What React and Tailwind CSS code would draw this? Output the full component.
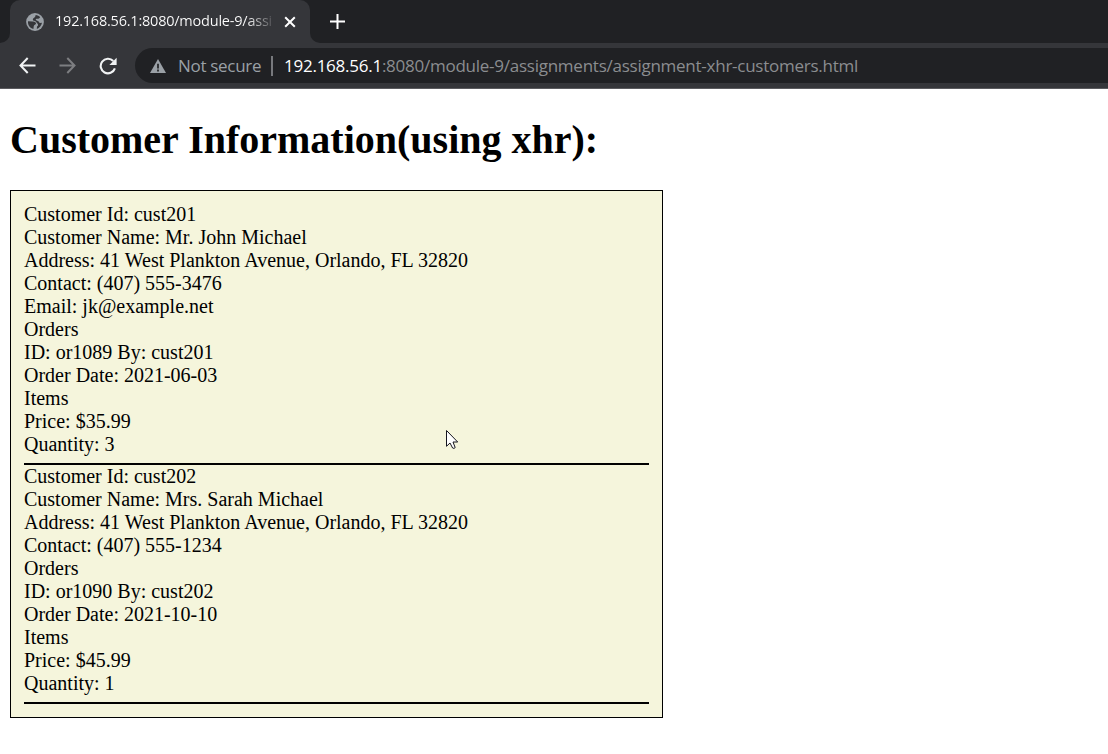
const customers = [
  {
    id: 'cust201',
    lines: [
      'Customer Id: cust201',
      'Customer Name: Mr. John Michael',
      'Address: 41 West Plankton Avenue, Orlando, FL 32820',
      'Contact: (407) 555-3476',
      'Email: jk@example.net',
      'Orders',
      'ID: or1089 By: cust201',
      'Order Date: 2021-06-03',
      'Items',
      'Price: $35.99',
      'Quantity: 3',
    ],
  },
  {
    id: 'cust202',
    lines: [
      'Customer Id: cust202',
      'Customer Name: Mrs. Sarah Michael',
      'Address: 41 West Plankton Avenue, Orlando, FL 32820',
      'Contact: (407) 555-1234',
      'Orders',
      'ID: or1090 By: cust202',
      'Order Date: 2021-10-10',
      'Items',
      'Price: $45.99',
      'Quantity: 1',
    ],
  },
];

function GlobeIcon() {
  return (
    <svg className="ml-4 size-[18px] shrink-0" viewBox="0 0 18 18">
      <circle cx="9" cy="9" r="8.9" fill="#9aa0a6" />
      <path d="M2 8.2 L7 8.4 C9 8.6 10.2 9.4 10 10.8 C9.8 11.8 8 11.6 7.8 13 L7.4 15.9 C4 15.2 1.6 12.2 2 8.2 Z" fill="#35363a" />
      <path d="M9.6 2 C11.6 2.2 13 2.9 14.2 4.2 L13.2 5.2 C12.2 6 10.4 5.4 9.8 6.2 C9.4 7.2 11 7.6 12 8 C13 8.4 13 9.8 14 10 L16 9.8 C15.4 12.8 13.6 15 10.8 15.9 L11 13.6 C12.2 13 12.4 11.6 11.4 10.6 C10.6 9.4 9.6 8 8 7.8 C6.6 7.4 6.6 6 7.4 5.2 C8.4 4.6 9.6 3.8 9.6 2 Z" fill="#35363a" />
    </svg>
  );
}

function TabStrip() {
  return (
    <div className="flex h-[43px] bg-[#202124]">
      <div className="w-[10px] bg-[#35363a]">
        <div className="h-full rounded-br-[10px] bg-[#202124]" />
      </div>
      <div className="flex w-[300px] items-center rounded-t-[10px] bg-[#35363a]">
        <GlobeIcon />
        <div className="ml-[11px] w-[218px] overflow-hidden bg-gradient-to-r from-white from-88% to-white/10 bg-clip-text pb-px font-['Open_Sans',sans-serif] text-[14.5px] tracking-[-0.22px] whitespace-nowrap text-transparent">
          192.168.56.1:8080/module-9/assi
        </div>
        <svg className="ml-[11px] size-[12px] shrink-0" viewBox="0 0 12 12">
          <path d="M1.2 1.2 L10.8 10.8 M10.8 1.2 L1.2 10.8" stroke="#fff" strokeWidth="2" />
        </svg>
      </div>
      <div className="flex-1 bg-[#35363a]">
        <div className="flex h-full items-center rounded-bl-[10px] bg-[#202124] pl-5">
          <svg className="size-[15px]" viewBox="0 0 15 15">
            <path d="M7.5 0 V15 M0 7.5 H15" stroke="#fff" strokeWidth="2" />
          </svg>
        </div>
      </div>
    </div>
  );
}

function Toolbar() {
  return (
    <div className="flex h-[46px] items-start border-b border-[#5b5b5f] bg-[#35363a] pt-[5px]">
      <div className="flex h-[35px] w-[135px] shrink-0 items-center pl-[19px]">
        <svg className="size-[17px]" viewBox="0 0 17 17" fill="none" stroke="#f1f3f4" strokeWidth="2">
          <path d="M16.5 8.5 H2 M8.7 1 L1.5 8.5 L8.7 16" />
        </svg>
        <svg className="ml-[23px] size-[17px]" viewBox="0 0 17 17" fill="none" stroke="#7d7e81" strokeWidth="2">
          <path d="M0.5 8.5 H15 M8.3 1 L15.5 8.5 L8.3 16" />
        </svg>
        <svg className="ml-[23px] size-[18px]" viewBox="0 0 18 18">
          <path d="M15.9 11.4 A7.3 7.3 0 1 1 14.3 4" fill="none" stroke="#f1f3f4" strokeWidth="2.1" />
          <path d="M17.6 0.8 V8 H10.4 Z" fill="#f1f3f4" />
        </svg>
      </div>
      <div className="flex h-[35px] flex-1 items-center rounded-l-full bg-[#202124] pl-[15px] font-['Open_Sans',sans-serif] text-[17px] whitespace-nowrap">
        <svg className="size-[16px] shrink-0" viewBox="0 0 16 16">
          <path d="M8 1 L16 15 H0 Z" fill="#9aa0a6" />
          <path d="M8 5.8 V10.4 M8 11.6 V13.4" stroke="#202124" strokeWidth="1.7" />
        </svg>
        <span className="ml-[12px] w-[93px] tracking-[-0.3px] text-[#9aa0a6]">Not secure</span>
        <span className="h-5 w-[2px] bg-[#77797d]" />
        <span className="ml-[11px] tracking-[-0.25px] text-[#8b8d90]">
          <span className="text-white">192.168.56.1</span>:8080/module-9/assignments/assignment-xhr-customers.html
        </span>
      </div>
    </div>
  );
}

export default function App() {
  return (
    <div className="relative h-[754px] w-[1108px] overflow-hidden bg-white">
      <TabStrip />
      <Toolbar />
      <main className="px-[10px] font-['Liberation_Serif',serif] text-black">
        <h1 className="mt-[28px] h-[46px] text-[40px] leading-[46px] font-bold whitespace-nowrap">Customer Information(using xhr):</h1>
        <div className="mt-[27px] h-[528px] w-[653px] border border-black bg-[#f5f5dc] px-[13px] pt-[12px] text-[20px] leading-[23px]">
          {customers.map((customer) => (
            <section key={customer.id}>
              {customer.lines.map((line) => (
                <div key={line}>{line}</div>
              ))}
              <hr className="mt-[7px] border-t-2 border-black" />
            </section>
          ))}
        </div>
      </main>
      <svg className="absolute top-[429px] left-[445px] h-[21px] w-[14px]" viewBox="0 0 14 21">
        <path d="M1.5 1.5 V17.3 L5 14 L7.6 19 Q9 20 10.2 18.6 L8 13 H12.7 Z" fill="#fff" stroke="#15151f" strokeWidth="1" />
      </svg>
    </div>
  );
}
